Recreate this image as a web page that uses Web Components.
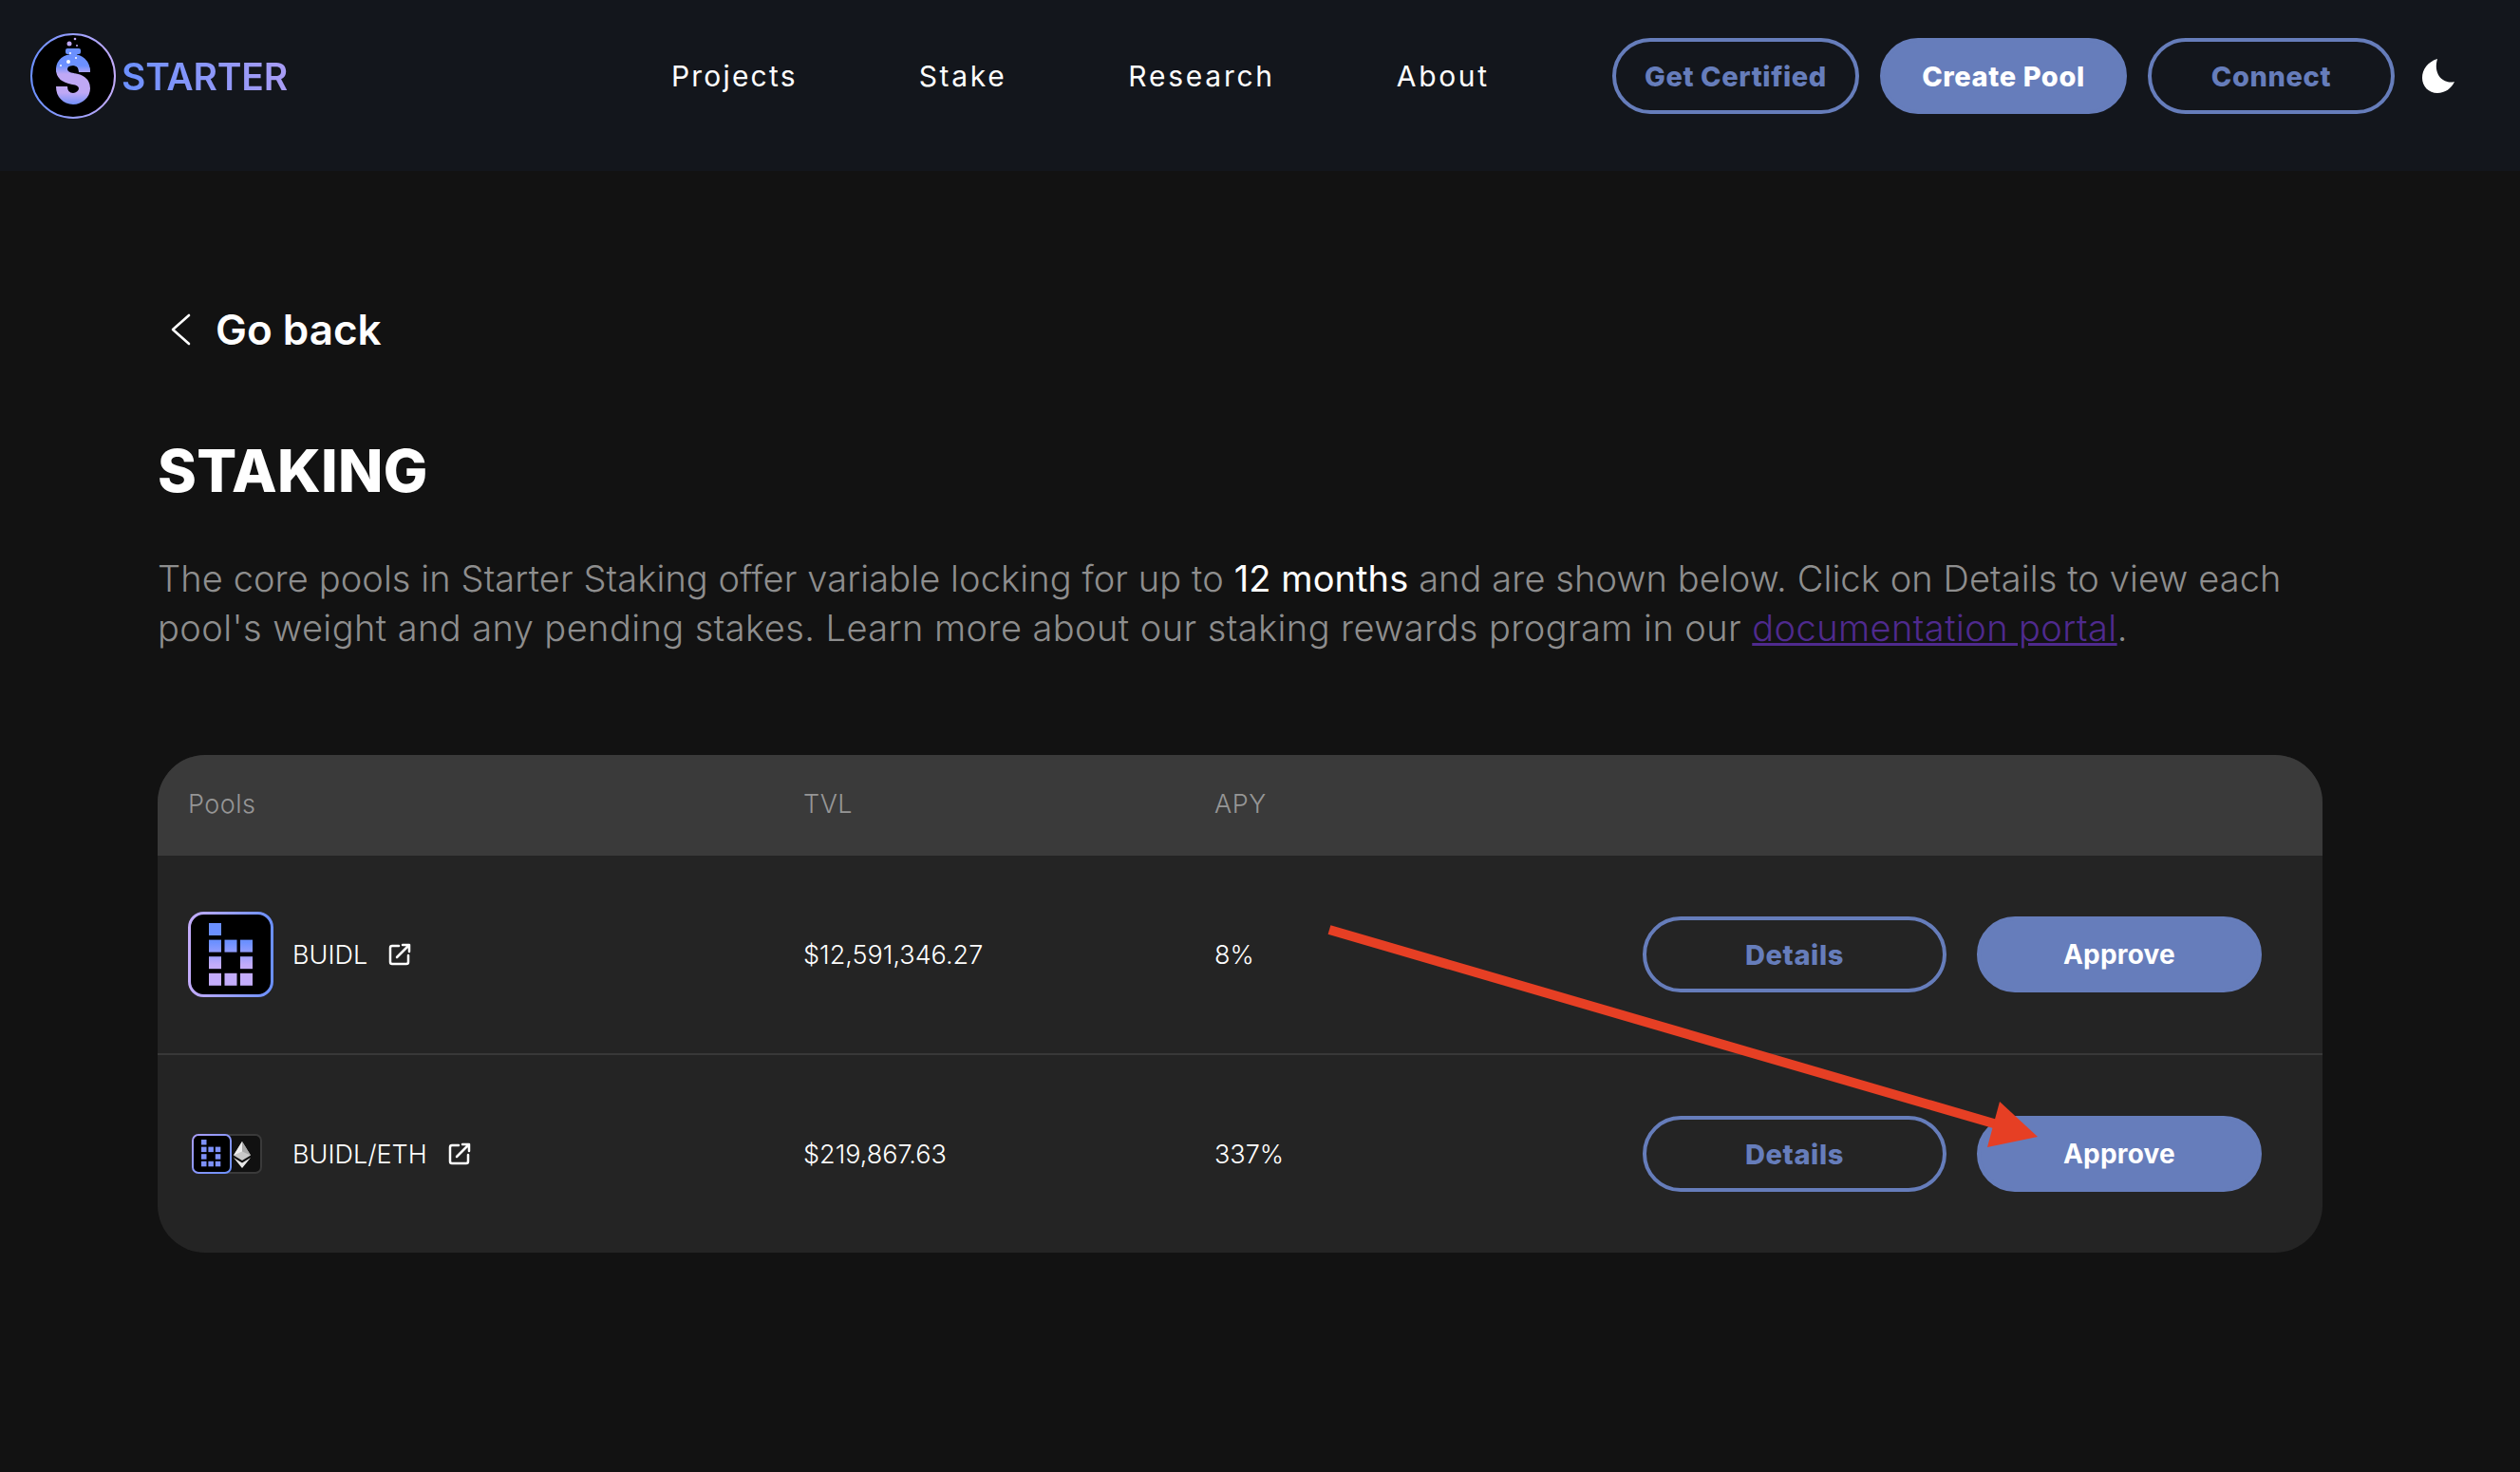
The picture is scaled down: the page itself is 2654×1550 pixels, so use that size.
<!DOCTYPE html>
<html lang="en">
<head>
<meta charset="utf-8">
<title>Staking</title>
<style>
    html, body { margin: 0; background: #121212; }
    body { width: 2654px; height: 1550px; overflow: hidden; font-family: Inter, "Liberation Sans", sans-serif; }
</style>
</head>
<body>
<staking-page>
    <site-header slot="header">
        <site-logo slot="logo"></site-logo>
        <nav-link style="--track: 2.2px">Projects</nav-link>
        <nav-link style="--track: 2.65px">Stake</nav-link>
        <nav-link style="--track: 2.75px">Research</nav-link>
        <nav-link style="--track: 2.65px">About</nav-link>
    </site-header>
    <go-back>Go back</go-back>
    <page-intro heading="STAKING">
        <span slot="first">The core pools in Starter Staking offer variable locking for up to <b>12 months</b> and are shown below. Click on Details to view each</span>
        <span slot="second">pool's weight and any pending stakes. Learn more about our staking rewards program in our <a href="#">documentation portal</a>.</span>
    </page-intro>
    <pools-table>
        <pool-row name="BUIDL" tvl="$12,591,346.27" apy="8%" icon="single"></pool-row>
        <pool-row name="BUIDL/ETH" tvl="$219,867.63" apy="337%" icon="pair" last></pool-row>
    </pools-table>
</staking-page>

<script>
const BUTTON_BLUE = '#667dbb';

window.customElements.define('pill-button', class extends HTMLElement {
    constructor() {
        super();
        this.attachShadow({ mode: 'open' });
        this.shadowRoot.innerHTML = `
            <style>
                :host {
                    display: flex;
                    align-items: center;
                    justify-content: center;
                    box-sizing: border-box;
                    width: var(--pill-width, 260px);
                    height: 80px;
                    border-radius: 40px;
                    border: 4px solid ${BUTTON_BLUE};
                    color: ${BUTTON_BLUE};
                    font: var(--pill-weight, 800) var(--pill-size, 29px) Inter, sans-serif;
                    letter-spacing: var(--pill-track, 0.6px);
                    white-space: nowrap;
                }
                :host([solid]) { background: ${BUTTON_BLUE}; color: #fff; }
            </style>
            <slot></slot>
        `;
    }
});

window.customElements.define('site-logo', class extends HTMLElement {
    constructor() {
        super();
        this.attachShadow({ mode: 'open' });
        this.shadowRoot.innerHTML = `
            <style>
                :host { display: flex; align-items: center; gap: 6px; }
                svg { display: block; }
                span {
                    font: 600 39px Inter, sans-serif;
                    letter-spacing: -0.2px;
                    background: linear-gradient(90deg, #6b90ff, #a99df5);
                    -webkit-background-clip: text;
                    background-clip: text;
                    color: transparent;
                }
            </style>
            <svg width="90" height="90" viewBox="0 0 90 90">
                <defs>
                    <linearGradient id="ring" x1="0" x2="1" y1="0" y2="0">
                        <stop offset="0" stop-color="#6b90ff"/><stop offset="1" stop-color="#c3acfa"/>
                    </linearGradient>
                    <linearGradient id="flask" gradientUnits="userSpaceOnUse" x1="0" x2="0" y1="16" y2="76">
                        <stop offset="0.3" stop-color="#6b90ff"/>
                        <stop offset="0.45" stop-color="#bfa8f5"/>
                        <stop offset="0.78" stop-color="#bfa8f5"/>
                        <stop offset="1" stop-color="#6b8ef8"/>
                    </linearGradient>
                </defs>
                <circle cx="45" cy="45" r="44" fill="#000" stroke="url(#ring)" stroke-width="2"/>
                <rect x="37" y="16" width="16" height="6" rx="2" fill="#6b90ff"/>
                <path d="M41 20 L49 20 L49 24 C57 26 63 32 63 41 L51 41 C51 36 49 34 45 34 C37 34 27 41 27 41 C27 32 33 26 41 24 Z" fill="#6b90ff"/>
                <path d="M57 41 C57 32 51 28 45 28 C38 28 33 32 33 38 C33 45 39 47 45 48 C52 49 57 52 57 58 C57 64 51 69 45 69 C38 69 33 64 33 56" fill="none" stroke="url(#flask)" stroke-width="12"/>
                <circle cx="41" cy="11" r="2.5" fill="#bfa8f5"/>
                <circle cx="47" cy="6" r="1.3" fill="#bfa8f5"/>
                <circle cx="49" cy="13" r="1" fill="#bfa8f5"/>
                <circle cx="40" cy="30" r="2" fill="#fff"/>
                <circle cx="42" cy="21" r="1" fill="#fff"/>
                <circle cx="48" cy="26" r="1" fill="#fff"/>
                <circle cx="32" cy="34" r="1" fill="#fff"/>
            </svg>
            <span>STARTER</span>
        `;
    }
});

window.customElements.define('nav-link', class extends HTMLElement {
    constructor() {
        super();
        this.attachShadow({ mode: 'open' });
        this.shadowRoot.innerHTML = `
            <style>
                :host {
                    display: block;
                    font: 400 30px Inter, sans-serif;
                    letter-spacing: var(--track, 2.3px);
                    color: #fff;
                }
            </style>
            <slot></slot>
        `;
    }
});

window.customElements.define('site-header', class extends HTMLElement {
    constructor() {
        super();
        this.attachShadow({ mode: 'open' });
        this.shadowRoot.innerHTML = `
            <style>
                :host {
                    display: flex;
                    align-items: center;
                    box-sizing: border-box;
                    height: 180px;
                    padding: 0 69px 20px 32px;
                    background: #13161c;
                }
                .nav { display: flex; gap: 128px; margin-left: 404px; }
                .actions { display: flex; align-items: center; gap: 22px; margin-left: auto; }
                .actions pill-button:nth-child(3) { margin-right: 7px; }
                svg { display: block; }
            </style>
            <slot name="logo"></slot>
            <div class="nav"><slot></slot></div>
            <div class="actions">
                <pill-button>Get Certified</pill-button>
                <pill-button solid>Create Pool</pill-button>
                <pill-button>Connect</pill-button>
                <svg width="34" height="36" viewBox="0 0 34 36">
                    <path d="M16 0 C6 3 0 11 0 20 C0 29 7 36 16 36 C24 36 31 31 34 24 C23 27 11 17 16 0 Z" fill="#fff"/>
                </svg>
            </div>
        `;
    }
});

window.customElements.define('go-back', class extends HTMLElement {
    constructor() {
        super();
        this.attachShadow({ mode: 'open' });
        this.shadowRoot.innerHTML = `
            <style>
                :host {
                    display: flex;
                    align-items: center;
                    gap: 26px;
                    padding-left: 13px;
                    font: 600 44px Inter, sans-serif;
                    color: #fff;
                }
                svg { display: block; }
            </style>
            <svg width="22" height="34" viewBox="0 0 22 34">
                <path d="M20 2 L3 17 L20 32" fill="none" stroke="#fff" stroke-width="2.6" stroke-linecap="round" stroke-linejoin="round"/>
            </svg>
            <slot></slot>
        `;
    }
});

window.customElements.define('page-intro', class extends HTMLElement {
    constructor() {
        super();
        this.attachShadow({ mode: 'open' });
        this.shadowRoot.innerHTML = `
            <style>
                :host { display: block; }
                h1 {
                    margin: 0 0 49px;
                    font: 800 62px/76px Inter, sans-serif;
                    letter-spacing: 0.3px;
                    color: #fff;
                }
                .copy {
                    font: 300 38px/52px Inter, sans-serif;
                    letter-spacing: 0.1px;
                    color: #8e8e8e;
                    white-space: nowrap;
                }
                ::slotted(span) { display: block; }
                ::slotted([slot="second"]) { letter-spacing: 0.43px; }
            </style>
            <h1></h1>
            <div class="copy">
                <slot name="first"></slot>
                <slot name="second"></slot>
            </div>
        `;
    }

    connectedCallback() {
        this.shadowRoot.querySelector('h1').textContent = this.getAttribute('heading');
        this.querySelectorAll('b').forEach(b => { b.style.cssText = 'font-weight:400;color:#fff'; });
        this.querySelectorAll('a').forEach(a => { a.style.color = '#4f2a8e'; });
    }
});

window.customElements.define('pools-table', class extends HTMLElement {
    constructor() {
        super();
        this.attachShadow({ mode: 'open' });
        this.shadowRoot.innerHTML = `
            <style>
                :host {
                    display: block;
                    width: 2280px;
                    border-radius: 50px;
                    overflow: hidden;
                    background: #242424;
                }
                .head {
                    display: grid;
                    grid-template-columns: 648px 433px 1fr;
                    align-items: center;
                    box-sizing: border-box;
                    height: 106px;
                    padding: 0 0 3px 32px;
                    background: #3a3a3a;
                    color: #969696;
                    font: 300 27px Inter, sans-serif;
                    letter-spacing: 0.5px;
                }
            </style>
            <div class="head"><span>Pools</span><span>TVL</span><span>APY</span></div>
            <slot></slot>
        `;
    }
});

window.customElements.define('pool-row', class extends HTMLElement {
    constructor() {
        super();
        this.attachShadow({ mode: 'open' });
        this.shadowRoot.innerHTML = `
            <style>
                :host {
                    display: grid;
                    grid-template-columns: 648px 433px 1fr;
                    align-items: center;
                    box-sizing: border-box;
                    height: 210px;
                    padding: 0 64px 0 32px;
                    border-bottom: 2px solid #383838;
                    color: #fff;
                    font: 300 27px Inter, sans-serif;
                }
                :host([last]) { border-bottom: none; height: 208px; }
                .pool { display: flex; align-items: center; }
                .mark { flex: none; width: 110px; display: flex; }
                .name { margin-right: 22px; }
                .apy-cell { display: flex; justify-content: space-between; align-items: center; }
                .buttons { display: flex; gap: 32px; }
                .details { --pill-width: 320px; }
                .approve { --pill-width: 300px; --pill-weight: 700; --pill-size: 28px; --pill-track: 0.2px; }
                svg { display: block; }
            </style>
            <div class="pool">
                <span class="mark"></span>
                <span class="name"></span>
                <svg width="24" height="24" viewBox="0 0 24 24" fill="none" stroke="#fff" stroke-width="2.5" stroke-linecap="round" stroke-linejoin="round">
                    <path d="M11 3 H4 Q2 3 2 5 V20 Q2 22 4 22 H19 Q21 22 21 20 V13"/>
                    <path d="M9 15 L22 2 M15 2 H22 V9"/>
                </svg>
            </div>
            <span class="tvl"></span>
            <div class="apy-cell">
                <span class="apy"></span>
                <div class="buttons">
                    <pill-button class="details">Details</pill-button>
                    <pill-button class="approve" solid>Approve</pill-button>
                </div>
            </div>
        `;
    }

    connectedCallback() {
        const root = this.shadowRoot;
        root.querySelector('.name').textContent = this.getAttribute('name');
        root.querySelector('.tvl').textContent = this.getAttribute('tvl');
        root.querySelector('.apy').textContent = this.getAttribute('apy');
        root.querySelector('.mark').innerHTML = this.getAttribute('icon') === 'pair' ? this.pairIcon() : this.singleIcon();
    }

    squares(x0, y0, size, stepX, stepY, fill) {
        // b-shaped pixel mark: column, row offsets of the lit cells
        const cells = [[0, 0], [0, 1], [1, 1], [2, 1], [0, 2], [2, 2], [0, 3], [1, 3], [2, 3]];
        return cells.map(([c, r]) => `<rect x="${x0 + c * stepX}" y="${y0 + r * stepY}" width="${size}" height="${size}" fill="${fill}"/>`).join('');
    }

    singleIcon() {
        return `
            <svg width="90" height="90" viewBox="0 0 90 90">
                <defs>
                    <linearGradient id="edge" x1="0" x2="1" y1="0" y2="0">
                        <stop offset="0" stop-color="#c3acfa"/><stop offset="1" stop-color="#6b90ff"/>
                    </linearGradient>
                    <linearGradient id="cells" gradientUnits="userSpaceOnUse" x1="0" x2="0" y1="32" y2="56">
                        <stop offset="0" stop-color="#6b90ff"/><stop offset="1" stop-color="#c3acfa"/>
                    </linearGradient>
                </defs>
                <rect x="1.5" y="1.5" width="87" height="87" rx="15" fill="#000" stroke="url(#edge)" stroke-width="3"/>
                ${this.squares(22, 12, 13, 16.5, 17.6, 'url(#cells)')}
            </svg>
        `;
    }

    pairIcon() {
        return `
            <svg width="74" height="42" viewBox="0 0 74 42" style="margin-left:4px">
                <defs>
                    <linearGradient id="edge2" x1="0" x2="1" y1="0" y2="1">
                        <stop offset="0" stop-color="#a99df5"/><stop offset="1" stop-color="#6b90ff"/>
                    </linearGradient>
                </defs>
                <rect x="20" y="1" width="53" height="40" rx="6" fill="#111" stroke="#3a3a3a" stroke-width="2"/>
                <rect x="1" y="1" width="40" height="40" rx="6" fill="#000" stroke="url(#edge2)" stroke-width="2"/>
                ${this.squares(10, 6, 5.5, 7.4, 7.6, '#7d90f8')}
                <path d="M53 8 L44 22.5 L53 28 L62 22.5 Z" fill="#c8c8c8"/>
                <path d="M53 8 L44 22.5 L53 18.5 Z" fill="#ededed"/>
                <path d="M53 8 L62 22.5 L53 18.5 Z" fill="#a8a8a8"/>
                <path d="M44 25 L53 36 L62 25 L53 30.5 Z" fill="#e8e8e8"/>
            </svg>
        `;
    }
});

window.customElements.define('staking-page', class extends HTMLElement {
    constructor() {
        super();
        this.attachShadow({ mode: 'open' });
        this.shadowRoot.innerHTML = `
            <style>
                :host {
                    display: block;
                    position: relative;
                    width: 2654px;
                    height: 1550px;
                    background: #121212;
                }
                main { padding: 140px 208px 0 166px; display: flex; flex-direction: column; }
                ::slotted(go-back) { margin-bottom: 84px; }
                ::slotted(page-intro) { margin-bottom: 108px; }
                .annotation { position: absolute; left: 0; top: 0; pointer-events: none; }
            </style>
            <slot name="header"></slot>
            <main><slot></slot></main>
            <svg class="annotation" width="2654" height="1550" viewBox="0 0 2654 1550">
                <path d="M1400 979 L2110 1186" stroke="#e63f24" stroke-width="10" fill="none"/>
                <path d="M2106 1160 L2146 1197 L2093 1208 Z" fill="#e63f24"/>
            </svg>
        `;
    }
});
</script>
</body>
</html>
